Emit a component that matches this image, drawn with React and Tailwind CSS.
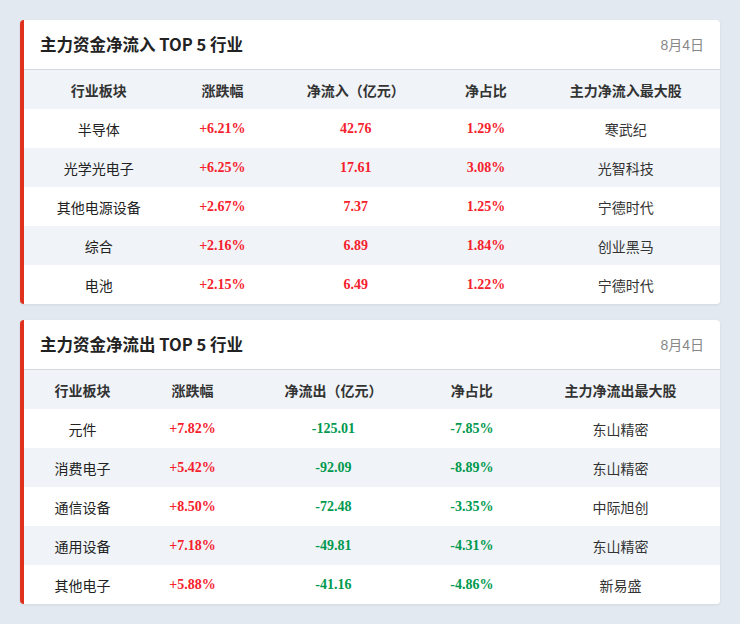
const inflow = [
  ["半导体", "+6.21%", "42.76", "1.29%", "寒武纪"],
  ["光学光电子", "+6.25%", "17.61", "3.08%", "光智科技"],
  ["其他电源设备", "+2.67%", "7.37", "1.25%", "宁德时代"],
  ["综合", "+2.16%", "6.89", "1.84%", "创业黑马"],
  ["电池", "+2.15%", "6.49", "1.22%", "宁德时代"],
];

const outflow = [
  ["元件", "+7.82%", "-125.01", "-7.85%", "东山精密"],
  ["消费电子", "+5.42%", "-92.09", "-8.89%", "东山精密"],
  ["通信设备", "+8.50%", "-72.48", "-3.35%", "中际旭创"],
  ["通用设备", "+7.18%", "-49.81", "-4.31%", "东山精密"],
  ["其他电子", "+5.88%", "-41.16", "-4.86%", "新易盛"],
];

const sans = { fontFamily: '"Microsoft YaHei", "Noto Sans CJK SC", sans-serif' };
const serif = { fontFamily: '"Liberation Serif", serif' };

function Card({ title, date, heads, rows, up }) {
  const numColor = up ? "text-[#f5222d]" : "text-[#00994e]";
  return (
    <div className="bg-white border-l-4 border-[#e0301e] rounded shadow-[0_1px_3px_rgba(0,0,0,0.08)] overflow-hidden">
      <div className="flex items-center justify-between h-[50px] px-4 border-b border-[#d5d9de]">
        <h2 className="text-[16.5px] font-bold text-[#222]">{title}</h2>
        <span className="text-sm text-[#888]" style={{ fontFamily: '"Liberation Sans", "Noto Sans CJK SC", sans-serif' }}>{date}</span>
      </div>
      <table className="w-full text-sm text-center">
        <thead>
          <tr className="bg-[#f0f4f8] h-[39px]">
            {heads.map((h) => (
              <th key={h} className="font-bold text-[#333] px-3">{h}</th>
            ))}
          </tr>
        </thead>
        <tbody>
          {rows.map((r, i) => (
            <tr key={r[0]} className={`h-[39px] ${i % 2 ? "bg-[#f0f4f8]" : "bg-white"}`}>
              <td className="text-[#222] px-3">{r[0]}</td>
              <td className="text-[#f5222d] font-bold px-3" style={serif}>{r[1]}</td>
              <td className={`${numColor} font-bold px-3`} style={serif}>{r[2]}</td>
              <td className={`${numColor} font-bold px-3`} style={serif}>{r[3]}</td>
              <td className="text-[#333] px-3">{r[4]}</td>
            </tr>
          ))}
        </tbody>
      </table>
    </div>
  );
}

export default function App() {
  return (
    <div className="min-h-screen bg-[#e3e9f0] p-5 flex flex-col gap-4" style={sans}>
      <Card
        title="主力资金净流入 TOP 5 行业"
        date="8月4日"
        heads={["行业板块", "涨跌幅", "净流入（亿元）", "净占比", "主力净流入最大股"]}
        rows={inflow}
        up
      />
      <Card
        title="主力资金净流出 TOP 5 行业"
        date="8月4日"
        heads={["行业板块", "涨跌幅", "净流出（亿元）", "净占比", "主力净流出最大股"]}
        rows={outflow}
      />
    </div>
  );
}
